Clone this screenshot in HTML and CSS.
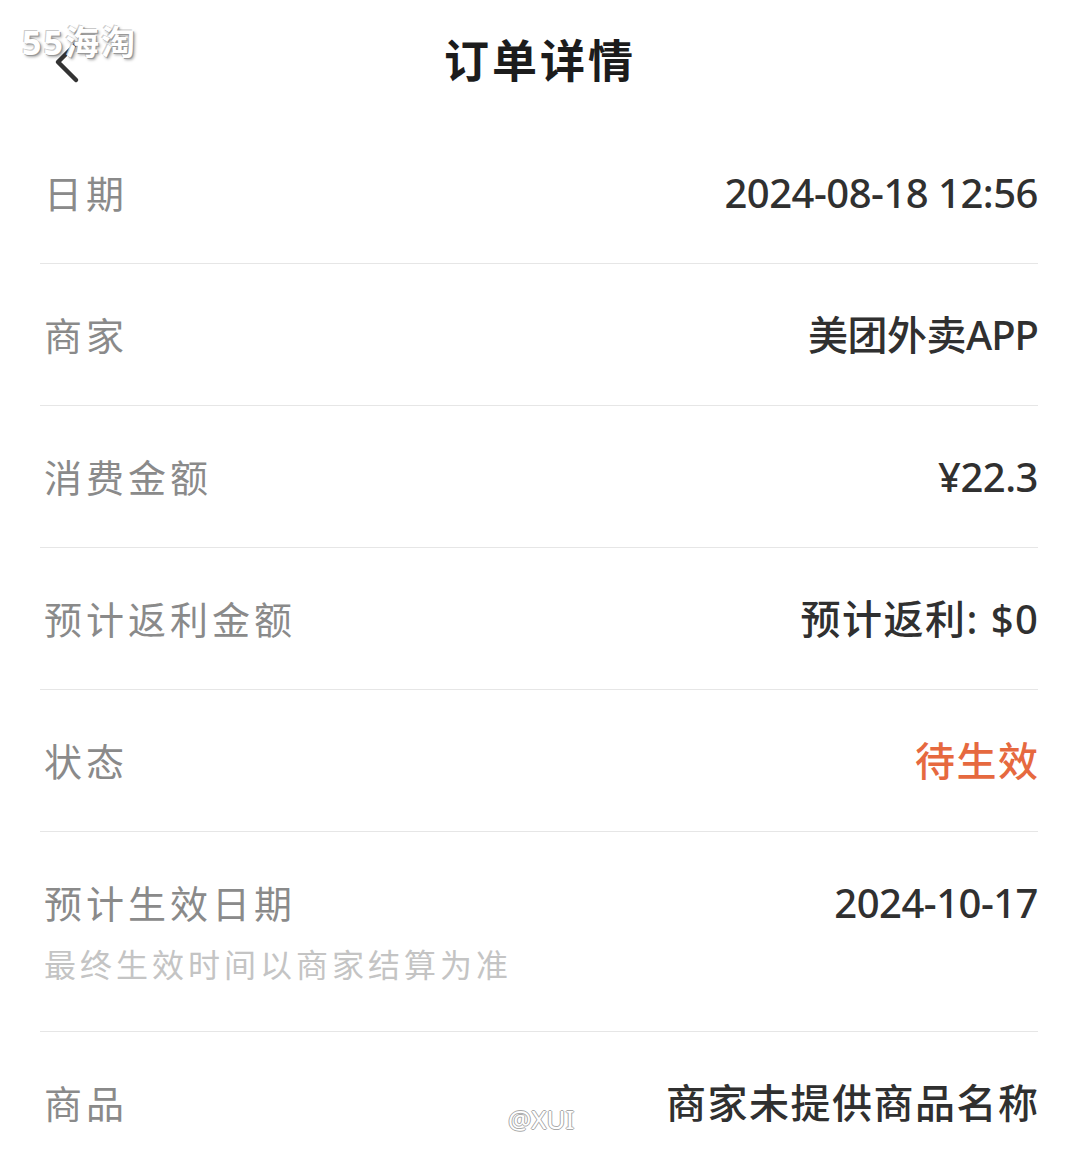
FILE: index.html
```html
<!DOCTYPE html>
<html lang="zh-CN">
<head>
    <meta charset="UTF-8">
    <meta name="viewport" content="width=device-width, initial-scale=1.0">
    <title>订单详情</title>
    <link rel="stylesheet" href="styles.css">
</head>
<body>
    <div class="page">
        <header class="topbar">
            <span class="back">
                <svg width="32" height="44" viewBox="0 0 32 44"><path d="M26 4 L8 22 L26 40" fill="none" stroke="#333" stroke-width="4.5" stroke-linecap="round" stroke-linejoin="round"/></svg>
            </span>
            <h1>订单详情</h1>
            <span class="mark-top">55海淘</span>
        </header>

        <div class="list">
            <div class="row">
                <div class="label">日期</div>
                <div class="value num">2024-08-18 12:56</div>
            </div>
            <div class="row">
                <div class="label">商家</div>
                <div class="value num">美团外卖<span class="latin">APP</span></div>
            </div>
            <div class="row">
                <div class="label">消费金额</div>
                <div class="value num">¥22.3</div>
            </div>
            <div class="row">
                <div class="label">预计返利金额</div>
                <div class="value">预计返利: $0</div>
            </div>
            <div class="row">
                <div class="label">状态</div>
                <div class="value status">待生效</div>
            </div>
            <div class="row row-tall">
                <div class="label">
                    预计生效日期
                    <div class="note">最终生效时间以商家结算为准</div>
                </div>
                <div class="value num">2024-10-17</div>
            </div>
            <div class="row last">
                <div class="label">商品</div>
                <div class="value">商家未提供商品名称</div>
                <span class="mark-bottom">@XUI</span>
            </div>
        </div>
    </div>
</body>
</html>
```

FILE: styles.css
```css
body {
    margin: 0;
    background: #fff;
    font-family: "Noto Sans", "Noto Sans CJK SC", sans-serif;
    color: #333;
}
.page {
    width: 1080px;
    height: 1166px;
    overflow: hidden;
}
.topbar {
    position: relative;
    height: 122px;
    display: flex;
    align-items: center;
    justify-content: center;
}
.topbar h1 {
    margin: 0;
    font-size: 45px;
    font-weight: 700;
    color: #1c1c1c;
    letter-spacing: 3px;
    position: relative;
    top: -3px;
}
.back {
    position: absolute;
    left: 50px;
    top: 40px;
}
.mark-top {
    position: absolute;
    left: 22px;
    top: 16px;
    font-size: 34px;
    font-weight: 700;
    color: #fff;
    letter-spacing: 2px;
    text-shadow: 1px 1px 0 #999, 2px 2px 3px rgba(0, 0, 0, 0.35), -1px -1px 0 #ccc;
}
.list {
    padding: 0 42px 0 40px;
}
.row {
    position: relative;
    display: flex;
    justify-content: space-between;
    align-items: flex-start;
    padding: 43px 0 42px 4px;
    border-bottom: 1px solid #e6e6e6;
    line-height: 56px;
}
.row.last {
    border-bottom: none;
}
.label {
    font-size: 38px;
    color: #8a8a8a;
    letter-spacing: 4px;
}
.value {
    font-size: 40px;
    font-weight: 500;
    color: #303030;
    letter-spacing: 1.5px;
    margin-right: -1.5px;
}
.value.num {
    letter-spacing: -0.5px;
    margin-right: 0;
}
.latin {
    letter-spacing: -1px;
}
.status {
    color: #e6693f;
}
.row-tall {
    padding-bottom: 44px;
}
.note {
    margin-top: 12px;
    font-size: 32px;
    line-height: 44px;
    color: #c4c4c4;
    letter-spacing: 4px;
}
.mark-bottom {
    position: absolute;
    left: 468px;
    top: 72px;
    font-size: 26px;
    line-height: 30px;
    color: #fff;
    text-shadow: 1px 0 0 #aaa, -1px 0 0 #aaa, 0 1px 0 #aaa, 0 -1px 0 #aaa;
}
```
